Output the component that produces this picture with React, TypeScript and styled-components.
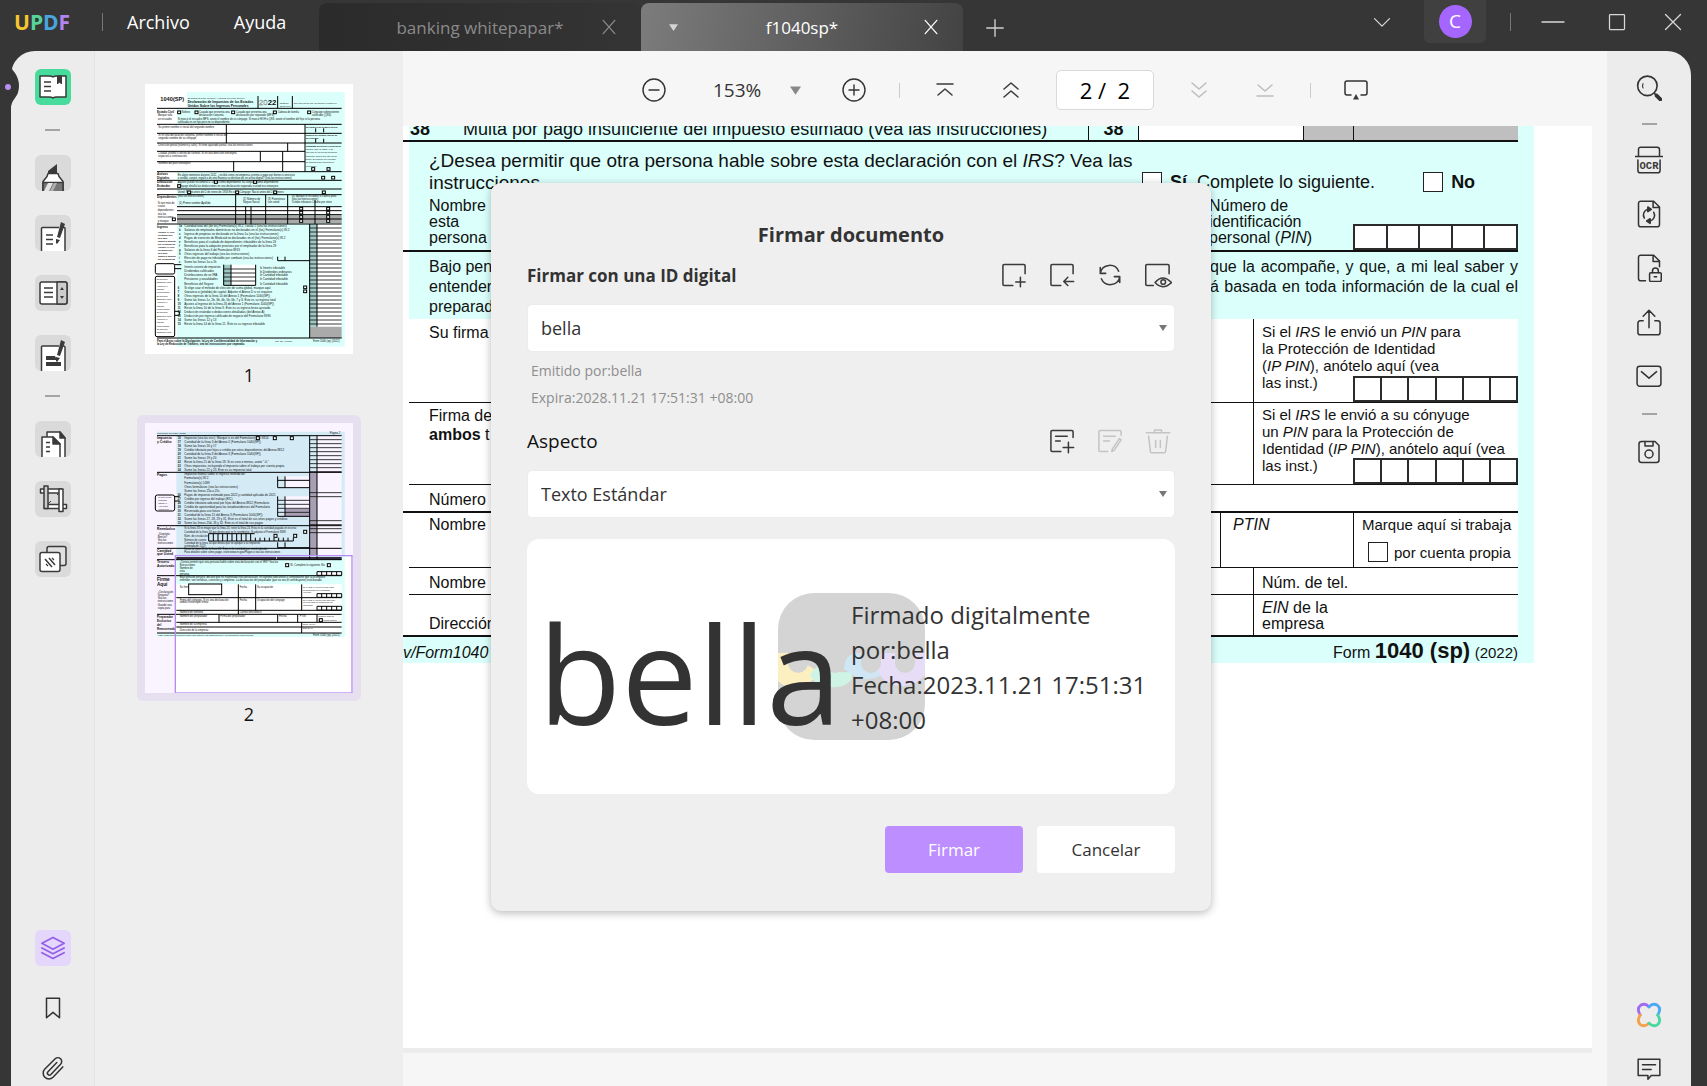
import React from "react";
import styled, { createGlobalStyle, css } from "styled-components";

const ink = "#3a3a3a";
const uiFont = `"Open Sans", "Noto Sans", sans-serif`;
const formFont = `"Liberation Sans", Arial, sans-serif`;
const cyan = "#dbfffb";

const GlobalStyle = createGlobalStyle`
  *, *::before, *::after { box-sizing: border-box; }
  body { margin: 0; background: #363636; font-family: ${uiFont}; color: #333; }
  button, select, input { font: inherit; color: inherit; margin: 0; }
  h1, h2, p { margin: 0; }
`;

const App = styled.div`
  display: flex;
  flex-direction: column;
  height: 100vh;
  overflow: hidden;
  background: #363636;
`;

/* Title bar */

const TitleBar = styled.header`
  display: flex;
  flex: none;
  height: 51px;
  color: #fff;
`;

const Brand = styled.div`
  display: flex;
  align-items: center;
  width: 319px;
  height: 43px;
  padding-left: 14px;
`;

const Logo = styled.span`
  width: 57px;
  margin-right: 31px;
  font-size: 21px;
  font-weight: 700;
`;

const Letter = styled.span<{ $color: string }>`
  color: ${(p) => p.$color};
`;

const BarDivider = styled.span`
  flex: none;
  width: 1px;
  height: 18px;
  background: #777;
`;

const Menu = styled.nav`
  display: flex;
  gap: 44px;
  padding-left: 24px;
`;

const bare = css`
  padding: 0;
  border: 0;
  background: none;
  cursor: pointer;
`;

const MenuButton = styled.button`
  ${bare}
  font-size: 18px;
`;

const Tab = styled.div<{ $active?: boolean }>`
  display: grid;
  grid-template-columns: 64px 1fr 64px;
  align-items: center;
  justify-items: center;
  width: 322px;
  height: 48px;
  margin-top: 3px;
  border-radius: 8px 8px 0 0;
  font-size: 17px;
  color: ${(p) => (p.$active ? "#fff" : "#8a8a8a")};
  background: ${(p) =>
    p.$active ? "linear-gradient(100deg, #7c7c7c, #434343)" : "linear-gradient(90deg, #2b2b2b, #343434)"};
`;

const BarButton = styled.button<{ $width?: number }>`
  ${bare}
  display: flex;
  align-items: center;
  justify-content: center;
  width: ${(p) => p.$width ?? 24}px;
  color: inherit;
`;

const NewTab = styled(BarButton)`
  margin: 6px 0 0 16px;
  height: 43px;
  color: #d0d0d0;
`;

const WindowControls = styled.div`
  display: flex;
  align-items: center;
  height: 43px;
  margin-left: auto;
  color: #d8d8d8;
`;

const Account = styled.button`
  ${bare}
  display: flex;
  align-items: center;
  justify-content: center;
  width: 62px;
  height: 43px;
  margin: 0 24px 0 14px;
  border-radius: 0 0 6px 6px;
  background: #404040;
`;

const Avatar = styled.span`
  width: 33px;
  height: 33px;
  border-radius: 50%;
  background: #a566ff;
  color: #fff;
  font-size: 19px;
  line-height: 33px;
`;

/* Workspace */

const Workspace = styled.div`
  position: relative;
  display: flex;
  flex: 1;
  min-height: 0;
  margin: 0 16px 0 11px;
`;

const Notch = styled.svg`
  position: absolute;
  left: -11px;
  top: 10px;
  z-index: 2;
`;

const Rail = styled.aside<{ $side: "left" | "right" }>`
  display: flex;
  flex: none;
  flex-direction: column;
  align-items: center;
  justify-content: space-between;
  width: 84px;
  padding-top: ${(p) => (p.$side === "left" ? 18 : 20)}px;
  background: #ececec;
  ${(p) =>
    p.$side === "left"
      ? "border-right: 1px solid #e4e4e4; border-radius: 24px 0 0 0;"
      : "border-radius: 0 24px 0 0;"}
`;

const RailGroup = styled.div<{ $gap: number }>`
  display: flex;
  flex-direction: column;
  align-items: center;
  gap: ${(p) => p.$gap}px;
`;

const RailRule = styled.span<{ $tight?: boolean }>`
  width: 15px;
  height: 2px;
  margin: ${(p) => (p.$tight ? "-2px 0" : "0")};
  background: #a4a4a4;
`;

const tones = { plain: "none", tile: "#dadada", green: "#48dc9c", violet: "#e5d6fb" };

const Tool = styled.button<{ $tone?: keyof typeof tones }>`
  ${bare}
  display: flex;
  align-items: center;
  justify-content: center;
  width: 36px;
  height: 36px;
  border-radius: 6px;
  overflow: hidden;
  background: ${(p) => tones[p.$tone ?? "plain"]};
`;

const RightTool = styled(Tool)`
  height: 34px;
  overflow: visible;
`;

const Thumbnails = styled.aside`
  display: flex;
  flex: none;
  flex-direction: column;
  align-items: center;
  gap: 27px;
  width: 308px;
  padding-top: 25px;
  background: #eeeeee;
`;

const Thumb = styled.figure`
  margin: 0;
  text-align: center;
`;

const ThumbFrame = styled.div<{ $selected?: boolean }>`
  padding: 8px;
  border-radius: 6px;
  background: ${(p) => (p.$selected ? "#e6dff0" : "transparent")};
  svg { display: block; }
`;

const ThumbLabel = styled.figcaption`
  font-size: 18px;
  line-height: 26px;
  color: #111;
`;

const Viewer = styled.main`
  display: flex;
  flex: 1;
  flex-direction: column;
  min-width: 0;
  background: #f6f6f6;
`;

const Toolbar = styled.div`
  display: flex;
  flex: none;
  align-items: center;
  justify-content: center;
  gap: 33px;
  height: 75px;
  padding-top: 3px;
`;

const ToolPair = styled.div<{ $muted?: boolean }>`
  display: flex;
  gap: 42px;
  color: ${(p) => (p.$muted ? "#bdbdbd" : ink)};
`;

const ToolbarRule = styled.span`
  width: 1px;
  height: 15px;
  background: #ccc;
`;

const SelectBox = styled.div`
  position: relative;
  display: flex;
  align-items: center;
  svg { position: absolute; right: 8px; pointer-events: none; }
`;

const ZoomSelect = styled.select`
  appearance: none;
  width: 110px;
  height: 30px;
  padding: 0 0 0 14px;
  border: 0;
  background: none;
  font-size: 19px;
`;

const PageInput = styled.input`
  width: 98px;
  height: 40px;
  padding: 0;
  border: 1px solid #d9d9d9;
  border-radius: 5px;
  background: #fff;
  color: #000;
  font-size: 22px;
  text-align: center;
`;

const Sheet = styled.article`
  display: flex;
  flex: 1;
  flex-direction: column;
  margin: 0 15px 38px 0;
  background: #fff;
  box-shadow: 0 5px 0 #ececec;
  overflow: hidden;
`;

/* Tax form */

const Form = styled.div`
  padding-right: 58px;
  font-family: ${formFont};
  font-size: 16px;
  line-height: 19px;
  color: #111;
  white-space: nowrap;
`;

const Band = styled.div`
  padding-right: 16px;
  background: linear-gradient(90deg, #fff 6px, ${cyan} 6px);
`;

const Ruled = styled.div<{ $height: number; $rule?: number; $inset?: boolean; $white?: boolean }>`
  display: flex;
  height: ${(p) => p.$height}px;
  margin-left: ${(p) => (p.$inset ? 6 : 0)}px;
  padding-left: ${(p) => (p.$inset ? 20 : 26)}px;
  border-bottom: ${(p) => p.$rule ?? 0}px solid #111;
  background: ${(p) => (p.$white ? "#fff" : "transparent")};
`;

const WhiteBlock = styled.div`
  background: #fff;
`;

const LineItem = styled(Ruled)`
  align-items: flex-end;
  padding-left: 7px;
  font-size: 18px;
  line-height: 22px;
  overflow: hidden;
`;

const LineNumber = styled.b<{ $width: number; $center?: boolean }>`
  width: ${(p) => p.$width}px;
  text-align: ${(p) => (p.$center ? "center" : "left")};
`;

const LineText = styled.span`
  flex: 1;
`;

const LineCell = styled.span<{ $width: number; $fill: string }>`
  width: ${(p) => p.$width}px;
  height: 100%;
  border-left: 1px solid #111;
  background: ${(p) => p.$fill};
`;

const Consent = styled(Ruled)`
  flex-direction: column;
  padding-top: 8px;
`;

const ConsentTop = styled.div`
  display: flex;
  height: 48px;
  font-size: 18px;
  line-height: 22px;
`;

const Question = styled.p`
  flex: 1;
  min-width: 0;
  font-size: 19px;
  white-space: pre-line;
`;

const Options = styled.div`
  display: flex;
  flex: none;
  gap: 48px;
  width: 376px;
  padding-top: 22px;
`;

const Tick = styled.label`
  display: flex;
  align-items: center;
  gap: 8px;
  height: 20px;
`;

const TickBox = styled.input`
  appearance: none;
  width: 20px;
  height: 20px;
  border: 1px solid #222;
  background: #fff;
`;

const ConsentBottom = styled.div`
  display: flex;
  flex: 1;
  line-height: 16px;
`;

const Lines = styled.p<{ $width?: number }>`
  ${(p) => (p.$width ? `width: ${p.$width}px;` : "flex: 1;")}
  white-space: pre-line;
`;

const Pin = styled.span<{ $height: number }>`
  display: flex;
  align-self: end;
  justify-self: end;
  width: 165px;
  height: ${(p) => p.$height}px;
  border: 2px solid #2b2b2b;
  background: #fff;
  i { flex: 1; }
  i + i { border-left: 2px solid #2b2b2b; }
`;

const Oath = styled(Ruled)`
  justify-content: space-between;
  padding-top: 5px;
  line-height: 20px;
`;

const Justified = styled.p`
  width: 308px;
  text-align: justify;
  text-align-last: justify;
  white-space: pre-line;
`;

const Cell = styled.div<{ $width?: number; $pad?: number; $lead?: number; $indent?: number }>`
  ${(p) =>
    p.$width ? `width: ${p.$width}px; border-left: 1px solid #111; padding-left: ${p.$indent ?? 8}px;` : "flex: 1;"}
  padding-top: ${(p) => p.$pad ?? 2}px;
  line-height: ${(p) => p.$lead ?? 19}px;
  white-space: pre-line;
`;

const PinCell = styled(Cell)`
  display: grid;
  font-size: 15px;
  > * { grid-area: 1 / 1; }
`;

const SelfEmployed = styled(Cell)`
  font-size: 15px;
  label { gap: 6px; margin: 8px 0 0 6px; }
`;

const FormFooter = styled.div`
  display: flex;
  align-items: baseline;
  justify-content: space-between;
  height: 26px;
  padding-right: 16px;
  background: ${cyan};
  line-height: 28px;
`;

const FormName = styled.span`
  b { font-size: 22px; }
  small { font-size: 15px; }
`;

/* Dialog */

const Dialog = styled.section`
  position: absolute;
  top: 132px;
  left: 50%;
  z-index: 3;
  display: flex;
  flex-direction: column;
  width: 720px;
  margin-left: -360px;
  padding: 38px 36px;
  border-radius: 10px;
  background: #efefef;
  box-shadow: 0 2px 8px rgba(0, 0, 0, 0.28);
`;

const DialogTitle = styled.h1`
  margin-bottom: 12px;
  font-size: 20px;
  line-height: 28px;
  text-align: center;
`;

const SectionHead = styled.div`
  display: flex;
  align-items: center;
  justify-content: space-between;
  height: 28px;
`;

const SectionLabel = styled.label<{ $strong?: boolean }>`
  font-size: ${(p) => (p.$strong ? 17 : 19)}px;
  font-weight: ${(p) => (p.$strong ? 700 : 400)};
  color: ${(p) => (p.$strong ? "#333" : "#111")};
`;

const Actions = styled.div`
  display: flex;
  gap: 20px;
  padding-right: 3px;
`;

const IconButton = styled.button`
  ${bare}
  display: flex;
  align-items: center;
  justify-content: center;
  width: 28px;
  height: 28px;
  color: ${ink};
  &:disabled { color: #c4c4c4; }
`;

const Field = styled(SelectBox)`
  margin-top: 15px;
`;

const FieldSelect = styled.select`
  appearance: none;
  width: 100%;
  height: 48px;
  padding: 0 40px 0 13px;
  border: 1px solid #ececec;
  border-radius: 5px;
  background: #fff;
  font-size: 18px;
`;

const Meta = styled.p`
  margin: 5px 0 16px 4px;
  font-size: 14px;
  line-height: 27px;
  color: #8e8e8e;
`;

const Preview = styled.div`
  position: relative;
  display: grid;
  grid-template-columns: 313px 1fr;
  align-items: center;
  height: 255px;
  margin: 21px 0 32px;
  padding-left: 11px;
  border-radius: 12px;
  background: #fff;
  overflow: hidden;
`;

const Watermark = styled.svg`
  position: absolute;
  top: 54px;
  left: 50%;
  margin-left: -73px;
`;

const SignatureName = styled.span`
  position: relative;
  padding-top: 12px;
  font-size: 136px;
  line-height: 200px;
`;

const SignatureText = styled.p`
  position: relative;
  font-size: 24px;
  line-height: 35px;
`;

const DialogButtons = styled.div`
  display: flex;
  justify-content: flex-end;
  gap: 14px;
`;

const DialogButton = styled.button<{ $primary?: boolean }>`
  ${bare}
  width: 138px;
  height: 47px;
  border-radius: 4px;
  font-size: 17px;
  color: ${(p) => (p.$primary ? "#fff" : "#333")};
  background: ${(p) => (p.$primary ? "#bd8eff" : "#fff")};
`;

/* Icons */

type IconProps = { size?: number; width?: number; children: React.ReactNode };

const Icon = ({ size = 24, width = 1.5, children }: IconProps) => (
  <svg
    width={size}
    height={size}
    viewBox="0 0 24 24"
    fill="none"
    stroke="currentColor"
    strokeWidth={width}
    strokeLinecap="round"
    strokeLinejoin="round"
    aria-hidden="true"
  >
    {children}
  </svg>
);

const TileIcon = ({ children }: { children: React.ReactNode }) => (
  <svg width="36" height="36" viewBox="0 0 36 36" fill="none" stroke={ink} strokeWidth="1.5" strokeLinejoin="round" aria-hidden="true">
    {children}
  </svg>
);

const Caret = ({ size = 8, color = "#777" }: { size?: number; color?: string }) => (
  <svg width={size} height={size} viewBox="0 0 8 8" fill={color} aria-hidden="true">
    <path d="M0 1h8L4 7z" />
  </svg>
);

const CrossIcon = () => (
  <Icon size={20}>
    <path d="M5 4l14 16M19 4L5 20" />
  </Icon>
);

const ReaderIcon = () => (
  <TileIcon>
    <path d="M5 7h9q3 0 4 1 1-1 4-1h9v21h-9q-3 0-4 1-1-1-4-1H5z" fill="#fff" />
    <path d="M9 13h7M9 17.500h7M9 22h7" />
    <path d="M22.500 7h4v8l-2-2-2 2z" fill={ink} strokeWidth="1" />
  </TileIcon>
);

const HighlighterIcon = () => (
  <TileIcon>
    <path d="M13 18v-2l9-7v9z" fill={ink} stroke="none" />
    <path d="M13 18.500h10l1 3 4 5v10H8v-10l4-5z" fill="#fff" />
    <path d="M8 27.500h20V37H8z" fill="#777" />
    <path d="M9 36l4-8h5l-4 8z" fill="#e4e4e4" stroke="none" />
    <path d="M15 36l4-8h3l-4 8z" fill="#b0b0b0" stroke="none" />
  </TileIcon>
);

const PenStroke = () => (
  <g fill={ink} stroke="none">
    <path d="M26 7l4 2-5 14-3-1z" />
    <path d="M21 24l4 1-3 4-1-1z" />
  </g>
);

const CommentPageIcon = () => (
  <TileIcon>
    <path d="M24 12.500H7.500q-1 0-1 1V38H30V13q0-.500-2-.500" fill="#fff" />
    <path d="M11 20h7M11 24.500h7M11 29h7" />
    <PenStroke />
  </TileIcon>
);

const FormFieldsIcon = () => (
  <TileIcon>
    <rect x="5" y="7" width="27" height="22" rx="2" fill="#fff" />
    <path d="M22 7h8q2 0 2 2v18q0 2-2 2h-8z" fill="#ccc" />
    <path d="M9 13h9M9 17.500h9M9 22h9" />
    <path d="M25 15l2-3 2 3zM25 21l2 3 2-3z" fill={ink} stroke="none" />
  </TileIcon>
);

const RedactIcon = () => (
  <TileIcon>
    <path d="M24 11H7.500q-1 0-1 1v25H30V12q0-1-2-1" fill="#fff" />
    <path d="M11 21h9l2 4H11zM11 27h15v4H11z" fill={ink} stroke="none" />
    <g transform="translate(0 -2)">
      <PenStroke />
    </g>
  </TileIcon>
);

const PagesIcon = () => (
  <TileIcon>
    <path d="M12 11h13l5 6v20H12z" fill="#fff" />
    <path d="M25 11v6h5z" fill={ink} />
    <path d="M7 16h11l7 7v14H7z" fill="#fff" />
    <path d="M18 16v7h7z" fill={ink} />
    <path d="M11 21.500h4M11 26h4M11 30.500h4" />
  </TileIcon>
);

const CropPageIcon = () => (
  <TileIcon>
    <path d="M5.500 8h21v4h-21zM9.500 23.500h22v4h-22z" fill="#fff" />
    <path d="M9 5h4v22.500H9z" fill="#ccc" />
    <path d="M24 8h4v22.500h-4z" fill="#fff" />
    <path d="M13 23l3-3M24 12l-2 2" strokeWidth="1" />
  </TileIcon>
);

const StampIcon = () => (
  <TileIcon>
    <rect x="12" y="5.500" width="19" height="19" rx="2" fill="#e0e0e0" />
    <rect x="5" y="11.500" width="20" height="19" rx="2" fill="#fff" />
    <path d="M10 18l7 8M14 17l6 7" />
    <path d="M17 17l2 2M11 23l2 2" strokeWidth="1.200" />
  </TileIcon>
);

const LayersIcon = () => (
  <Icon size={28}>
    <g stroke="#9460e8">
      <path d="M12 3l9.500 5-9.500 5-9.500-5z" />
      <path d="M2.500 12l9.500 5 9.500-5M2.500 16l9.500 5 9.500-5" />
    </g>
  </Icon>
);

const leftTools = [
  [HighlighterIcon, "Resaltar"],
  [CommentPageIcon, "Comentar"],
  [FormFieldsIcon, "Formulario"],
  [RedactIcon, "Redactar"],
] as const;

const pageTools = [
  [PagesIcon, "Organizar"],
  [CropPageIcon, "Recortar"],
  [StampIcon, "Marca de agua"],
] as const;

/* Page miniatures: drawn at three times their size */

const Rows = ({ from, to, step, x, width }: { from: number; to: number; step: number; x: number; width: number }) => (
  <g stroke="#111" strokeWidth="2.500">
    {Array.from({ length: Math.floor((to - from) / step) + 1 }, (_, i) => (
      <path key={i} d={`M${x} ${from + i * step}h${width}`} />
    ))}
  </g>
);

const Words = ({ lines, x, size = 8, bold }: { lines: [number, string][]; x: number; size?: number; bold?: boolean }) => (
  <g fontFamily="Liberation Sans, sans-serif" fontSize={size} fontWeight={bold ? 700 : 400} fill="#111">
    {lines.map(([y, text]) => (
      <text key={y} x={x} y={y}>
        {text}
      </text>
    ))}
  </g>
);

const incomeLines = [
  "Cantidad total del (de los) Formulario(s) W-2, casilla 1 (vea las instrucciones)",
  "Salarios de empleados domésticos no declarados en el (los) Formulario(s) W-2",
  "Ingreso de propinas no declarado en la línea 1a (vea las instrucciones)",
  "Pagos de exención de Medicaid no declarados en el (los) Formulario(s) W-2",
  "Beneficios para el cuidado de dependientes tributables de la línea 26",
  "Beneficios para la adopción provistos por el empleador de la línea 29",
  "Salarios de la línea 6 del Formulario 8919",
  "Otros ingresos del trabajo (vea las instrucciones)",
  "Elección de pago no tributable por combate (vea las instrucciones)",
  "Sume las líneas 1a a 1h",
];

const lowerLines = [
  "Si elige usar el método de elección de suma global, marque aquí",
  "Ganancia o (pérdida) de capital. Adjunte el Anexo D si se requiere",
  "Otros ingresos de la línea 10 del Anexo 1 (Formulario 1040(SP))",
  "Sume las líneas 1z, 2b, 3b, 4b, 5b, 6b, 7 y 8. Éste es su ingreso total",
  "Ajustes al ingreso de la línea 26 del Anexo 1 (Formulario 1040(SP))",
  "Reste la línea 10 de la línea 9. Éste es su ingreso bruto ajustado",
  "Deducción estándar o deducciones detalladas (del Anexo A)",
  "Deducción por ingreso calificado de negocio del Formulario 8995",
  "Sume las líneas 12 y 13",
  "Reste la línea 14 de la línea 11. Éste es su ingreso tributable",
];

const MiniPageOne = () => (
  <svg width="208" height="270" viewBox="44 42 624 810" role="img" aria-label="Página 1">
    <path fill="#fff" d="M44 42h624v810H44z" />
    <path fill={cyan} d="M170 66h473v764H140V305h384V163H140v-46h30z" />
    <path fill="#fff" d="M80 163h444v142H80zM140 410h494v22H140zM560 462h74v342h-74zM302 584h74v62h-74z" />
    <path fill="#aaa" d="M140 436h494v24H140zM538 770h96v34h-96z" />
    <path fill="#9fc9c5" d="M538 462h22v308h-22zM280 584h22v62h-22z" />
    <Words x={90} size={17} bold lines={[[94, "1040(SP)"]]} />
    <Words x={172} size={10} bold lines={[[99, "Declaración de Impuestos de los Estados"], [110, "Unidos Sobre los Ingresos Personales"]]} />
    <Words x={172} size={7} lines={[[88, "Department of the Treasury—Internal Revenue Service"]]} />
    <Words x={412} size={23} bold lines={[[104, "22"]]} />
    <text x="386" y="104" fontSize="23" fontFamily="Liberation Sans, sans-serif" fill="none" stroke="#777" strokeWidth="1">20</text>
    <Words x={448} size={7} lines={[[102, "OMB No."], [110, "1545-0074"]]} />
    <Words x={490} size={6} lines={[[102, "Sólo para uso del IRS. No escriba ni engrape en"]]} />
    <Words x={80} size={9} bold lines={[[130, "Estado Civil"], [316, "Activos"], [327, "Digitales"], [340, "Deducción"], [351, "Estándar"], [384, "Dependientes"], [473, "Ingreso"]]} />
    <Words x={82} lines={[[139, "Marque sólo"], [149, "un recuadro"]]} />
    <Words x={154} lines={[[130, "Soltero"]]} />
    <Words x={206} lines={[[130, "Casado que presenta una"], [138, "declaración conjunta"]]} />
    <Words x={317} lines={[[130, "Casado que presenta una"], [138, "declaración por separado (MFS)"]]} />
    <Words x={442} lines={[[130, "Cabeza de familia"]]} />
    <Words x={545} lines={[[130, "Cónyuge sobreviviente"], [138, "calificado (QSS)"]]} />
    <Words x={142} lines={[[150, "Si marcó el recuadro MFS, anote el nombre de su cónyuge. Si marcó HOH o QSS, anote el nombre del hijo si la persona"], [158, "calificada es un hijo pero no su dependiente"], [318, "En algún momento durante 2022, ¿recibió como recompensa, premio o pago por bienes o servicios"], [326, "o vendió, canjeó, regaló o de otra manera se deshizo de un activo digital? (vea las instrucciones)"], [340, "Alguien puede reclamarlo a:      Usted como dependiente      Su cónyuge como dependiente"], [351, "     Cónyuge detalla las deducciones en una declaración separada o usted era extranjero"], [370, "Usted:      Nació antes del 2 de enero de 1958      Es ciego    Cónyuge:      Nació antes del 2 de enero"], [382, "(vea las instrucciones)"]]} />
    <Words x={146} lines={[[402, "(1) Primer nombre        Apellido"]]} />
    <Words x={338} lines={[[390, "(2) Número de"], [400, "Seguro Social"]]} />
    <Words x={412} lines={[[390, "(3) Parentesco"], [400, "con usted"]]} />
    <Words x={484} lines={[[382, "(4) Marque el recuadro si califica para"], [390, "(vea las instrucciones):"], [400, "Crédito tributario    Crédito por otros"]]} />
    <Words x={84} lines={[[173, "Su primer nombre e inicial del segundo nombre"], [198, "Si es una declaración conjunta, primer nombre e inicial del"], [206, "segundo nombre de su cónyuge"], [228, "Dirección postal (número y calle). Si tiene apartado postal, vea las instrucciones"], [252, "Ciudad, pueblo u oficina de correos. Si es una dirección extranjera"], [260, "espacios a continuación"], [282, "Nombre del país extranjero"]]} />
    <Words x={526} bold size={7} lines={[[173, "Su número de Seguro Social"], [198, "Número de Seguro Social de"], [206, "su cónyuge"], [230, "Campaña Electoral Presidencial"]]} />
    <Words x={526} size={7} lines={[[240, "Marque aquí si usted, o su"], [250, "cónyuge si es una declaración"], [260, "conjunta, desea que $3 vayan"], [270, "fondo. El marcar un recuadro"], [280, "no cambiará su impuesto ni"], [290, "reembolso"]]} />
    <Words x={82} lines={[[402, "Si son más de"], [412, "cuatro"], [422, "dependientes"], [434, "vea las"], [444, "instrucciones"], [455, "y marque"]]} />
    <Words x={82} size={7} bold lines={Array.from({ length: 10 }, (_, i) => [488 + i * 9, ["Adjunte el (los)", "Formulario(s)", "W-2 aquí", "También adjunte", "los Formularios"][i % 5]] as [number, string])} />
    <Words x={162} size={9} lines={incomeLines.map((t, i) => [470 + i * 12, t] as [number, string])} />
    <Words x={146} bold lines={"1a b c d e f g h i z".split(" ").map((t, i) => [470 + i * 12, t] as [number, string])} />
    <Words x={162} size={9} lines={[[593, "Interés exento de impuesto"], [605, "Dividendos calificados"], [618, "Distribuciones de un IRA"], [630, "Pensiones y anualidades"], [644, "Beneficios del Seguro"]]} />
    <Words x={390} size={9} lines={[[597, "b  Interés tributable"], [608, "b  Dividendos ordinarios"], [619, "b  Cantidad tributable"], [631, "b  Cantidad tributable"], [644, "b  Cantidad tributable"]]} />
    <Words x={162} size={9} lines={lowerLines.map((t, i) => [656 + i * 12, t] as [number, string])} />
    <Words x={142} bold lines={lowerLines.map((_, i) => [656 + i * 12, String(6 + i)] as [number, string])} />
    <Words x={79} size={7} lines={Array.from({ length: 17 }, (_, i) => [630 + i * 10, ["Deducción", "Estándar para", "• Soltero o", "casado", "presentando"][i % 5]] as [number, string])} />
    <Words x={80} bold lines={[[816, "Para el Aviso sobre la Divulgación, la Ley de Confidencialidad de Información y"], [825, "la Ley de Reducción de Trámites, vea las instrucciones por separado."]]} />
    <Words x={434} size={7} lines={[[816, "Cat. No. 74692T"]]} />
    <Words x={548} lines={[[816, "Form 1040 (sp) (2022)"]]} />
    <g stroke="#000" strokeWidth="3" fill="none">
      <path d="M80 115h554M80 163h554M80 190h554M80 219h554M80 244h444M80 275h444M80 305h554M80 331h554M80 357h554M80 374h554M80 462h554M80 804h554" />
      <path d="M383 78v37M442 78v37M486 78v37M288 163v56M524 163v142M472 219v25M390 244v31M457 244v61M310 275v30" />
      <path d="M316 374v88M346 410v52M362 410v52M406 374v88M472 374v88M554 390v72M538 462v342M560 462v308" />
      <path d="M140 410h494M140 422h494M140 434h494M140 447h494M280 584v62M302 584v62M376 584v62M280 646h96M442 560v12h96M464 560v12" />
      <path d="M556 175v12M580 175v12M556 206v12M580 206v12" />
      <rect x="75" y="581" width="58" height="31" rx="5" />
      <rect x="75" y="619" width="58" height="181" rx="5" />
      <path d="M133 584h20M133 596h20M133 724h14v12h-14" />
      {[142, 194, 304, 429, 532].map((x) => <rect key={x} x={x} y="123" width="9" height="8" fill="#fff" />)}
      {[[252, 332], [370, 332], [142, 344], [172, 363], [316, 363], [430, 363], [576, 363], [574, 319], [604, 319], [544, 293], [590, 293], [520, 648], [520, 660], [126, 444]].map(([x, y]) => (
        <rect key={`${x}-${y}`} x={x} y={y} width="9" height="8" fill="#fff" />
      ))}
      {[508, 589].map((x) => [412, 424, 437, 449].map((y) => <rect key={`${x}${y}`} x={x} y={y} width="9" height="8" fill="#fff" />))}
    </g>
    <Rows from={474} to={766} step={12} x={538} width={96} />
    <Rows from={597} to={640} step={12} x={280} width={96} />
  </svg>
);

const creditLines = [
  "Impuesto (vea las inst.). Marque si es del Formulario(s):   1     8814",
  "Cantidad de la línea 3 del Anexo 2 (Formulario 1040(SP))",
  "Sume las líneas 16 y 17",
  "Crédito tributario por hijos o crédito por otros dependientes del Anexo 8812",
  "Cantidad de la línea 8 del Anexo 3 (Formulario 1040(SP))",
  "Sume las líneas 19 y 20",
  "Reste la línea 21 de la línea 18. Si es cero o menos, anote \"-0-\"",
  "Otros impuestos, incluyendo el impuesto sobre el trabajo por cuenta propia",
  "Sume las líneas 22 y 23. Éste es su impuesto total",
];

const paymentLines = [
  "Pagos de impuesto estimado para 2022 y cantidad aplicada de 2021",
  "Crédito por ingreso del trabajo (EIC)",
  "Crédito tributario adicional por hijos del Anexo 8812 (Formulario",
  "Crédito de oportunidad para los estadounidenses del Formulario",
  "Reservada para uso futuro",
  "Cantidad de la línea 15 del Anexo 3 (Formulario 1040(SP))",
  "Sume las líneas 27, 28, 29 y 31. Éste es el total de sus otros pagos y créditos",
  "Sume las líneas 25d, 26 y 32. Éste es el total de sus pagos",
];

const MiniPageTwo = () => (
  <svg width="208" height="270" viewBox="44 68 624 810" role="img" aria-label="Página 2">
    <path fill="#f9f4ff" d="M44 68h624v810H44z" />
    <path fill="#d4ebf6" d="M80 94h60v12H80zM138 94h505v372H138z" />
    <path fill="#f9f4ff" d="M560 106h74v370h-74zM464 228h74v34h-74zM464 288h74v60h-74z" />
    <path fill="#a99fb5" d="M538 216h22v254h-22zM464 326h74v22h-74zM560 216h74v2h-74z" />
    <path fill="#fff" d="M134 466h534v412H134z" />
    <path fill={cyan} d="M138 466h505v244H138zM80 698h60v12H80z" />
    <path fill="#fff" d="M138 552h496v146H138z" />
    <path fill="#332c3d" d="M138 470h300v8H138zM440 470h194v8H440z" />
    <Words x={80} size={10} bold lines={[[117, "Impuesto"], [129, "y Crédito"], [228, "Pagos"], [388, "Reembolso"], [454, "Cantidad"], [464, "que Usted"], [488, "Tercero"], [499, "Autorizado"]]} />
    <Words x={80} size={9} bold lines={[[654, "Preparador"], [665, "Exclusivo"], [676, "del"], [688, "Remunerado"]]} />
    <Words x={80} size={14} bold lines={[[541, "Firme"], [556, "Aquí"]]} />
    <Words x={82} lines={[[403, "¿Depósito"], [413, "directo?"], [422, "Vea las"], [431, "instrucciones"], [577, "¿Declaración"], [586, "conjunta?"], [596, "Vea las"], [606, "instrucciones"], [616, "Guarde una"], [626, "copia para"]]} />
    <Words x={84} size={6} lines={[[293, "Si tiene un hijo"], [302, "calificado,"], [311, "adjunte el"], [320, "Anexo EIC"], [328, "(Form 1040)"]]} />
    <Words x={80} size={7} lines={[[102, "Formulario 1040(SP) (2022)"]]} />
    <Words x={598} lines={[[102, "Página 2"]]} />
    <Words x={162} size={9} lines={creditLines.map((t, i) => [117 + i * 12, t] as [number, string])} />
    <Words x={142} bold lines={creditLines.map((_, i) => [117 + i * 12, String(16 + i)] as [number, string])} />
    <Words x={162} size={9} lines={[[224, "Impuesto federal sobre el ingreso retenido de:"], [236, "Formulario(s) W-2"], [250, "Formulario(s) 1099"], [262, "Otros formularios (vea las instrucciones)"], [275, "Sume las líneas 25a a 25c"]]} />
    <Words x={162} size={9} lines={paymentLines.map((t, i) => [287 + i * 12, t] as [number, string])} />
    <Words x={142} bold lines={paymentLines.map((_, i) => [287 + i * 12, String(26 + i)] as [number, string])} />
    <Words x={162} lines={[[386, "Si la línea 33 es mayor que la línea 24, reste la línea 24. Ésta es la cantidad pagada en exceso"], [397, "Cantidad de la línea 34 que desea que se le reembolse. Si adjunta el Formulario 8888"], [409, "Núm. de circulación"], [422, "Número de cuenta"], [432, "Cantidad de la línea 34 que desea que se aplique a su impuesto"], [441, "estimado de 2023"], [450, "Reste la línea 33 de la línea 24. Ésta es la cantidad que usted adeuda."], [459, "Para detalles sobre cómo pagar, visite www.irs.gov/Pagos o vea las instrucciones"]]} />
    <Words x={148} lines={[[488, "¿Desea permitir que otra persona hable sobre esta declaración con el IRS? Vea las"], [497, "instrucciones"], [507, "Nombre de"], [515, "esta"], [523, "persona"], [534, "Bajo pena de perjurio, declaro que he examinado esta declaración, incluyendo todo anexo y comprobante que la acompañe"], [543, "entender, son verídicos, correctos y completos. La declaración del preparador (que no sea el contribuyente) está basada"], [563, "Su firma"], [601, "Firma del cónyuge. Si es una declaración"], [609, "ambos tienen que firmar"], [638, "Número de teléfono"], [650, "Nombre del preparador"], [675, "Nombre de la empresa"], [692, "Dirección de la empresa"]]} />
    <Words x={328} lines={[[563, "Fecha"], [601, "Fecha"], [638, "Correo electrónico"]]} />
    <Words x={380} lines={[[563, "Su ocupación"], [601, "Ocupación del cónyuge"]]} />
    <Words x={270} lines={[[650, "Firma del preparador"]]} />
    <Words x={446} lines={[[650, "Fecha"]]} />
    <Words x={508} lines={[[650, "PTIN"]]} />
    <Words x={564} size={7} lines={[[650, "Marque aquí si"], [662, "    por cuenta propia"]]} />
    <Words x={518} size={7} lines={[[563, "Si el IRS le envió un PIN para"], [571, "la Protección de Identidad"], [579, "(IP PIN)"], [601, "Si el IRS le envió a su cónyuge"], [609, "un PIN para la Protección de"], [617, "Identidad"], [675, "Núm. de tel."], [687, "EIN de la"]]} />
    <Words x={480} lines={[[497, "Sí. Complete lo siguiente.        No"]]} />
    <Words x={548} lines={[[708, "Form 1040 (sp) (2022)"]]} />
    <Words x={82} size={7} lines={[[708, "Visite www.irs.gov/Form1040SP para obtener las instrucciones y la información más reciente."]]} />
    <g stroke="#000" strokeWidth="3" fill="none">
      <path d="M80 106h554M80 216h554M80 376h554M80 444h554M80 478h554M80 526h554M138 592h496M138 630h496M80 642h554M138 666h496M138 680h496M80 698h554" />
      <path d="M538 106v370M560 106v370M442 228v34M464 228v34M442 262h96M442 240h96M442 288v60M464 288v60M442 348h96M442 426v16h96M464 426v16" />
      <path d="M324 552v90M376 552v78M514 552v78M266 642v24M442 642v24M502 642v24M560 642v24M514 666v32" />
      <rect x="175" y="551" width="99" height="32" fill="#fff" />
      <rect x="75" y="284" width="58" height="48" rx="6" />
      <path d="M133 289h15M133 302h15" />
      <path d="M235 400v22h254v-10M249 400v22M263 400v22M277 400v22M291 400v22M305 400v22M319 400v22M333 400v22M347 400v22M361 400v22M375 412v10M389 412v10M403 412v10M417 412v10M431 412v10M445 412v10M459 412v10M473 412v10M235 400h138" />
      {[[378, 109], [429, 109], [480, 109], [520, 390], [431, 402], [490, 402], [466, 490], [591, 490], [567, 655]].map(([x, y]) => (
        <rect key={`${x}-${y}`} x={x} y={y} width="9" height="9" fill="#fff" />
      ))}
      {[514, 580, 618].map((y) => (
        <path key={y} fill="#fff" d={`M560 ${y}h74v11h-74zM574 ${y}v11M589 ${y}v11M604 ${y}v11M619 ${y}v11`} />
      ))}
    </g>
    <Rows from={118} to={214} step={12} x={538} width={96} />
    <Rows from={277} to={289} step={12} x={538} width={96} />
    <Rows from={361} to={400} step={12} x={538} width={96} />
    <Rows from={300} to={340} step={12} x={442} width={96} />
    <rect x="135" y="466" width="530" height="412" fill="none" stroke="#b78cf0" strokeWidth="4" />
  </svg>
);

const PinBoxes = ({ count, height }: { count: number; height: number }) => (
  <Pin $height={height}>
    {Array.from({ length: count }, (_, i) => (
      <i key={i} />
    ))}
  </Pin>
);

const TaxForm = () => (
  <Form>
    <Band>
      <LineItem $height={16} $rule={2}>
        <LineNumber $width={53}>38</LineNumber>
        <LineText>Multa por pago insuficiente del impuesto estimado (vea las instrucciones)</LineText>
        <LineCell $width={1} $fill="none" />
        <LineNumber $width={49} $center>38</LineNumber>
        <LineCell $width={165} $fill="#fff" />
        <LineCell $width={50} $fill="#bfbfbf" />
        <LineCell $width={165} $fill="#bfbfbf" />
      </LineItem>
      <Consent $height={110} $rule={2}>
        <ConsentTop>
          <Question>
            ¿Desea permitir que otra persona hable sobre esta declaración con el <em>IRS</em>? Vea las{"\n"}instrucciones.
          </Question>
          <Options>
            <Tick>
              <TickBox type="checkbox" />
              <span><b>Sí.</b> Complete lo siguiente.</span>
            </Tick>
            <Tick>
              <TickBox type="checkbox" />
              <b>No</b>
            </Tick>
          </Options>
        </ConsentTop>
        <ConsentBottom>
          <Lines>{"Nombre\nesta\npersona"}</Lines>
          <Lines $width={144}>{"Número de\nidentificación\npersonal ("}<em>PIN</em>)</Lines>
          <PinBoxes count={5} height={26} />
        </ConsentBottom>
      </Consent>
      <Oath $height={67}>
        <Lines>{"Bajo pena\nentender\npreparador"}</Lines>
        <Justified>{"que la acompañe, y que, a mi leal saber y\ná basada en toda información de la cual el"}</Justified>
      </Oath>
      <WhiteBlock>
        <Ruled $height={84} $rule={1} $inset $white>
          <Cell $pad={4}>Su firma</Cell>
          <PinCell $width={265} $pad={4} $lead={17}>
            <span>Si el <em>IRS</em> le envió un <em>PIN</em> para{"\n"}la Protección de Identidad{"\n"}(<em>IP PIN</em>), anótelo aquí (vea{"\n"}las inst.)</span>
            <PinBoxes count={6} height={26} />
          </PinCell>
        </Ruled>
        <Ruled $height={82} $rule={1} $inset $white>
          <Cell $pad={3}>Firma de{"\n"}<b>ambos</b> t</Cell>
          <PinCell $width={265} $pad={3} $lead={17}>
            <span>Si el <em>IRS</em> le envió a su cónyuge{"\n"}un <em>PIN</em> para la Protección de{"\n"}Identidad (<em>IP PIN</em>), anótelo aquí (vea{"\n"}las inst.)</span>
            <PinBoxes count={6} height={26} />
          </PinCell>
        </Ruled>
        <Ruled $height={28} $rule={2} $white>
          <Cell $pad={5}>Número</Cell>
        </Ruled>
        <Ruled $height={55} $rule={1} $inset $white>
          <Cell>Nombre</Cell>
          <Cell $width={133} $indent={12}><em>PTIN</em></Cell>
          <SelfEmployed $width={165}>
            Marque aquí si trabaja
            <Tick>
              <TickBox type="checkbox" />
              por cuenta propia
            </Tick>
          </SelfEmployed>
        </Ruled>
        <Ruled $height={27} $rule={1} $inset $white>
          <Cell $pad={5}>Nombre</Cell>
          <Cell $width={265} $pad={5}>Núm. de tel.</Cell>
        </Ruled>
        <Ruled $height={42} $rule={2} $white>
          <Cell $pad={19}>Dirección</Cell>
          <Cell $width={265} $pad={5} $lead={16}><em>EIN</em> de la{"\n"}empresa</Cell>
        </Ruled>
      </WhiteBlock>
    </Band>
    <FormFooter>
      <em>v/Form1040</em>
      <FormName>Form <b>1040 (sp)</b> <small>(2022)</small></FormName>
    </FormFooter>
  </Form>
);

const SignDialog = () => (
  <Dialog role="dialog" aria-labelledby="sign-title">
    <DialogTitle id="sign-title">Firmar documento</DialogTitle>
    <SectionHead>
      <SectionLabel $strong htmlFor="digital-id">Firmar con una ID digital</SectionLabel>
      <Actions>
        <IconButton aria-label="Crear ID">
          <Icon size={28} width={1.3}><path d="M11 21H3.500q-1 0-1-1V4q0-1 1-1h17q1 0 1 1v7M17.500 14v8M13.500 18h8" /></Icon>
        </IconButton>
        <IconButton aria-label="Importar ID">
          <Icon size={28} width={1.3}><path d="M11 21H3.500q-1 0-1-1V4q0-1 1-1h17q1 0 1 1v7M22 17.500h-8.500M17 14l-3.500 3.500L17 21" /></Icon>
        </IconButton>
        <IconButton aria-label="Actualizar">
          <Icon size={26} width={1.4}><path d="M3 10a9 9 0 0 1 17-1.500M3 5v5.500h5M21 14a9 9 0 0 1-17 1.500M21 19v-5.500h-5" /></Icon>
        </IconButton>
        <IconButton aria-label="Ver certificado">
          <Icon size={28} width={1.3}><path d="M8 21H2.500q-1 0-1-1V4q0-1 1-1h18q1 0 1 1v7" /><path d="M9.500 18.500q6.500-8 14 0-7.500 7-14 0z" /><circle cx="16.500" cy="18" r="2" /></Icon>
        </IconButton>
      </Actions>
    </SectionHead>
    <Field>
      <FieldSelect id="digital-id" defaultValue="bella"><option>bella</option></FieldSelect>
      <Caret />
    </Field>
    <Meta>Emitido por:bella<br />Expira:2028.11.21 17:51:31 +08:00</Meta>
    <SectionHead>
      <SectionLabel htmlFor="appearance">Aspecto</SectionLabel>
      <Actions>
        <IconButton aria-label="Añadir aspecto">
          <Icon size={28} width={1.3}><path d="M11 21H3.500q-1 0-1-1V4q0-1 1-1h17q1 0 1 1v5M6.500 8h10M6.500 12h4M17.500 13v9M13 17.500h9" /></Icon>
        </IconButton>
        <IconButton aria-label="Editar aspecto" disabled>
          <Icon size={28} width={1.3}><path d="M10 21H3.500q-1 0-1-1V4q0-1 1-1h17q1 0 1 1v3M6.500 8h10M6.500 12h5M21.500 11l-6 9-2 1 .500-2 6-9z" /></Icon>
        </IconButton>
        <IconButton aria-label="Eliminar aspecto" disabled>
          <Icon size={28} width={1.3}><path d="M2 5h20M9 5V2.500h6V5M4 8l1.500 13q0 1 1 1h11q1 0 1-1L20 8M10 11.500v6M14 11.500v6" /></Icon>
        </IconButton>
      </Actions>
    </SectionHead>
    <Field>
      <FieldSelect id="appearance" defaultValue="Texto Estándar"><option>Texto Estándar</option></FieldSelect>
      <Caret />
    </Field>
    <Preview>
      <Watermark width="147" height="147" viewBox="0 0 147 147" aria-hidden="true">
        <rect width="147" height="147" rx="36" fill="#d4d4d4" />
        <path fill="#fdf0c0" d="M0 60h10l26 16v10q-10 8-22 8-8 0-14-6z" />
        <path fill="#cff3e5" d="M32 82q6-12 18-8 10 8 24 4v8q-8 10-22 8-14 0-20-12z" />
        <path fill="#cfe6f4" d="M66 76q0-16 16-16l24 14v6q-14 10-28 4z" />
        <path fill="#e8ddf7" d="M102 60h45v22q-12 14-30 10-14-4-18-16z" />
        <g fill="#d4d4d4">
          {[20, 57, 93, 127].map((x) => (
            <path key={x} d={`M${x - 10} 58v12a10 10 0 0 0 20 0v-12z`} />
          ))}
        </g>
      </Watermark>
      <SignatureName>bella</SignatureName>
      <SignatureText>
        Firmado digitalmente<br />por:bella<br />Fecha:2023.11.21 17:51:31<br />+08:00
      </SignatureText>
    </Preview>
    <DialogButtons>
      <DialogButton $primary>Firmar</DialogButton>
      <DialogButton>Cancelar</DialogButton>
    </DialogButtons>
  </Dialog>
);

export default function PdfEditor() {
  return (
    <App>
      <GlobalStyle />
      <TitleBar>
        <Brand>
          <Logo>
            <Letter $color="#f5c630">U</Letter>
            <Letter $color="#56d39a">P</Letter>
            <Letter $color="#4aa5df">D</Letter>
            <Letter $color="#b184f0">F</Letter>
          </Logo>
          <BarDivider />
          <Menu>
            <MenuButton>Archivo</MenuButton>
            <MenuButton>Ayuda</MenuButton>
          </Menu>
        </Brand>
        <Tab>
          <span />
          <span>banking whitepapar*</span>
          <BarButton aria-label="Cerrar banking whitepapar"><CrossIcon /></BarButton>
        </Tab>
        <Tab $active>
          <Caret size={9} color="#d5d5d5" />
          <span>f1040sp*</span>
          <BarButton aria-label="Cerrar f1040sp"><CrossIcon /></BarButton>
        </Tab>
        <NewTab $width={32} aria-label="Nueva pestaña">
          <Icon size={22}><path d="M12 3v18M3 12h18" /></Icon>
        </NewTab>
        <WindowControls>
          <BarButton $width={56} aria-label="Lista de pestañas">
            <Icon size={20}><path d="M3 8l9 9 9-9" /></Icon>
          </BarButton>
          <Account aria-label="Cuenta"><Avatar>C</Avatar></Account>
          <BarDivider />
          <BarButton $width={84} aria-label="Minimizar">
            <Icon size={24} width={1.3}><path d="M1 12h22" /></Icon>
          </BarButton>
          <BarButton $width={44} aria-label="Maximizar">
            <Icon size={20}><rect x="3" y="3" width="18" height="18" rx="1" /></Icon>
          </BarButton>
          <BarButton $width={68} aria-label="Cerrar ventana">
            <Icon size={20}><path d="M3 3l18 18M21 3L3 21" /></Icon>
          </BarButton>
        </WindowControls>
      </TitleBar>
      <Workspace>
        <Notch width="20" height="50" viewBox="0 0 20 50" aria-hidden="true">
          <path fill="#363636" d="M0 0h15q-6 7 0 12 4 6 4 13t-4 12q-4 5-4 10v3H0z" />
          <circle cx="8" cy="26" r="3" fill="#b78ff0" />
        </Notch>
        <Rail $side="left">
          <RailGroup $gap={24}>
            <Tool $tone="green" aria-label="Lector"><ReaderIcon /></Tool>
            <RailRule />
            {leftTools.map(([Glyph, label]) => (
              <Tool key={label} $tone="tile" aria-label={label}><Glyph /></Tool>
            ))}
            <RailRule />
            {pageTools.map(([Glyph, label]) => (
              <Tool key={label} $tone="tile" aria-label={label}><Glyph /></Tool>
            ))}
          </RailGroup>
          <RailGroup $gap={24}>
            <Tool $tone="violet" aria-label="Miniaturas"><LayersIcon /></Tool>
            <Tool aria-label="Marcadores">
              <Icon size={26} width={1.4}><path d="M6 3h12v18l-6-5-6 5z" /></Icon>
            </Tool>
            <Tool aria-label="Adjuntos">
              <Icon size={26} width={1.4}><path d="M21 11l-9 9.500a5 5 0 0 1-7.500-7.500L14 3.500a3.500 3.500 0 0 1 5 5L10 18a1.800 1.800 0 0 1-2.600-2.600L15.500 7" /></Icon>
            </Tool>
          </RailGroup>
        </Rail>
        <Thumbnails>
          <Thumb>
            <ThumbFrame><MiniPageOne /></ThumbFrame>
            <ThumbLabel>1</ThumbLabel>
          </Thumb>
          <Thumb>
            <ThumbFrame $selected><MiniPageTwo /></ThumbFrame>
            <ThumbLabel>2</ThumbLabel>
          </Thumb>
        </Thumbnails>
        <Viewer>
          <Toolbar>
            <BarButton aria-label="Alejar">
              <Icon width={1.4}><circle cx="12" cy="12" r="11" /><path d="M7 12h10" /></Icon>
            </BarButton>
            <SelectBox>
              <ZoomSelect aria-label="Zoom" defaultValue="153%"><option>153%</option></ZoomSelect>
              <Caret size={11} color="#888" />
            </SelectBox>
            <BarButton aria-label="Acercar">
              <Icon width={1.4}><circle cx="12" cy="12" r="11" /><path d="M7 12h10M12 7v10" /></Icon>
            </BarButton>
            <ToolbarRule />
            <ToolPair>
              <BarButton aria-label="Primera página">
                <Icon><path d="M4 6h16M5 17l7-6 7 6" /></Icon>
              </BarButton>
              <BarButton aria-label="Página anterior">
                <Icon><path d="M5 11l7-6 7 6M5 19l7-6 7 6" /></Icon>
              </BarButton>
            </ToolPair>
            <PageInput aria-label="Página" defaultValue="2 /  2" />
            <ToolPair $muted>
              <BarButton aria-label="Página siguiente">
                <Icon><path d="M5 5l7 6 7-6M5 13l7 6 7-6" /></Icon>
              </BarButton>
              <BarButton aria-label="Última página">
                <Icon><path d="M4 18h16M5 7l7 6 7-6" /></Icon>
              </BarButton>
            </ToolPair>
            <ToolbarRule />
            <BarButton aria-label="Presentación">
              <Icon>
                <path d="M7 17H3q-2 0-2-2V5q0-2 2-2h18q2 0 2 2v10q0 2-2 2h-4" />
                <path d="M9 21.500l3-5.500 3 5.500z" fill={ink} stroke="none" />
              </Icon>
            </BarButton>
          </Toolbar>
          <Sheet>
            <TaxForm />
          </Sheet>
        </Viewer>
        <Rail $side="right">
          <RailGroup $gap={20}>
            <RightTool aria-label="Buscar">
              <Icon size={26}><circle cx="10.500" cy="10" r="9" /><path d="M6.500 8q-1 2 0 4" strokeWidth="1" /><path d="M17 17l1.500 1.500" /><path d="M19 19l3.500 3.500" strokeWidth="3.500" /></Icon>
            </RightTool>
            <RailRule $tight />
            <RightTool aria-label="OCR">
              <Icon size={28} width={1.3}>
                <path d="M3 8V3q0-2 2-2h14q2 0 2 2v5M0 9h24M2.500 12v9q0 2 2 2h15q2 0 2-2v-9" />
                <text x="12" y="20" fontSize="9" fontWeight="700" fontFamily="Liberation Mono, monospace" textAnchor="middle" fill={ink} stroke="none">OCR</text>
              </Icon>
            </RightTool>
            <RightTool aria-label="Convertir">
              <Icon size={28} width={1.3}><path d="M3 3q0-2 2-2h11l5 5v15q0 2-2 2H5q-2 0-2-2zM15.500 1v5.500H21" /><path d="M8 15.500a5 5 0 0 1 3-7.500M16 10.500a5 5 0 0 1-3 7.500" /><path d="M11 6v4l3-2zM13 20v-4l-3 2z" fill={ink} /></Icon>
            </RightTool>
            <RightTool aria-label="Proteger">
              <Icon size={28} width={1.3}><path d="M9 23H5q-2 0-2-2V3q0-2 2-2h11l5 5v5M15.500 1v5.500H21" /><rect x="12.500" y="16" width="10" height="7.500" rx="1" /><path d="M15 16v-1.500a2.500 2.500 0 0 1 5 0V16M16.500 19.500h2" /></Icon>
            </RightTool>
            <RightTool aria-label="Compartir">
              <Icon size={28} width={1.3}><path d="M12 17V2M7 7l5-5 5 5M7 11H4.500q-2 0-2 2v8q0 2 2 2h15q2 0 2-2v-8q0-2-2-2H17" /></Icon>
            </RightTool>
            <RightTool aria-label="Enviar por correo">
              <Icon size={26} width={1.4}><rect x="1" y="3" width="22" height="18.500" rx="2.500" /><path d="M5 8l7 6 7-6" /></Icon>
            </RightTool>
            <RailRule />
            <RightTool aria-label="Guardar">
              <Icon size={24}><path d="M2 4q0-2.500 2.500-2.500H18l4 4V20q0 2.500-2.500 2.500h-15Q2 22.500 2 20z" /><path d="M8 1.500V6h8V1.500" /><circle cx="12" cy="14" r="4" /></Icon>
            </RightTool>
          </RailGroup>
          <RailGroup $gap={20}>
            <RightTool aria-label="Asistente">
              <Icon size={28} width={2.4}>
                <path d="M12 5q-3-3.500-7-1.500-4 3-.500 8.500" stroke="#a06bf0" />
                <path d="M12 5q3-3.500 7-1.500 4 3 .500 8.500" stroke="#4aa8f5" />
                <path d="M4.500 12q-3.500 5.500.500 8.500 4 2 7-1.500" stroke="#f5a04a" />
                <path d="M19.500 12q3.500 5.500-.500 8.500-4 2-7-1.500" stroke="#4ad8a0" />
              </Icon>
            </RightTool>
            <RightTool aria-label="Comentarios">
              <Icon size={26} width={1.4}><path d="M2 3h20v15H14l-3 3.500V18H2zM6 8h12M6 12.500h8" /></Icon>
            </RightTool>
          </RailGroup>
        </Rail>
        <SignDialog />
      </Workspace>
    </App>
  );
}
